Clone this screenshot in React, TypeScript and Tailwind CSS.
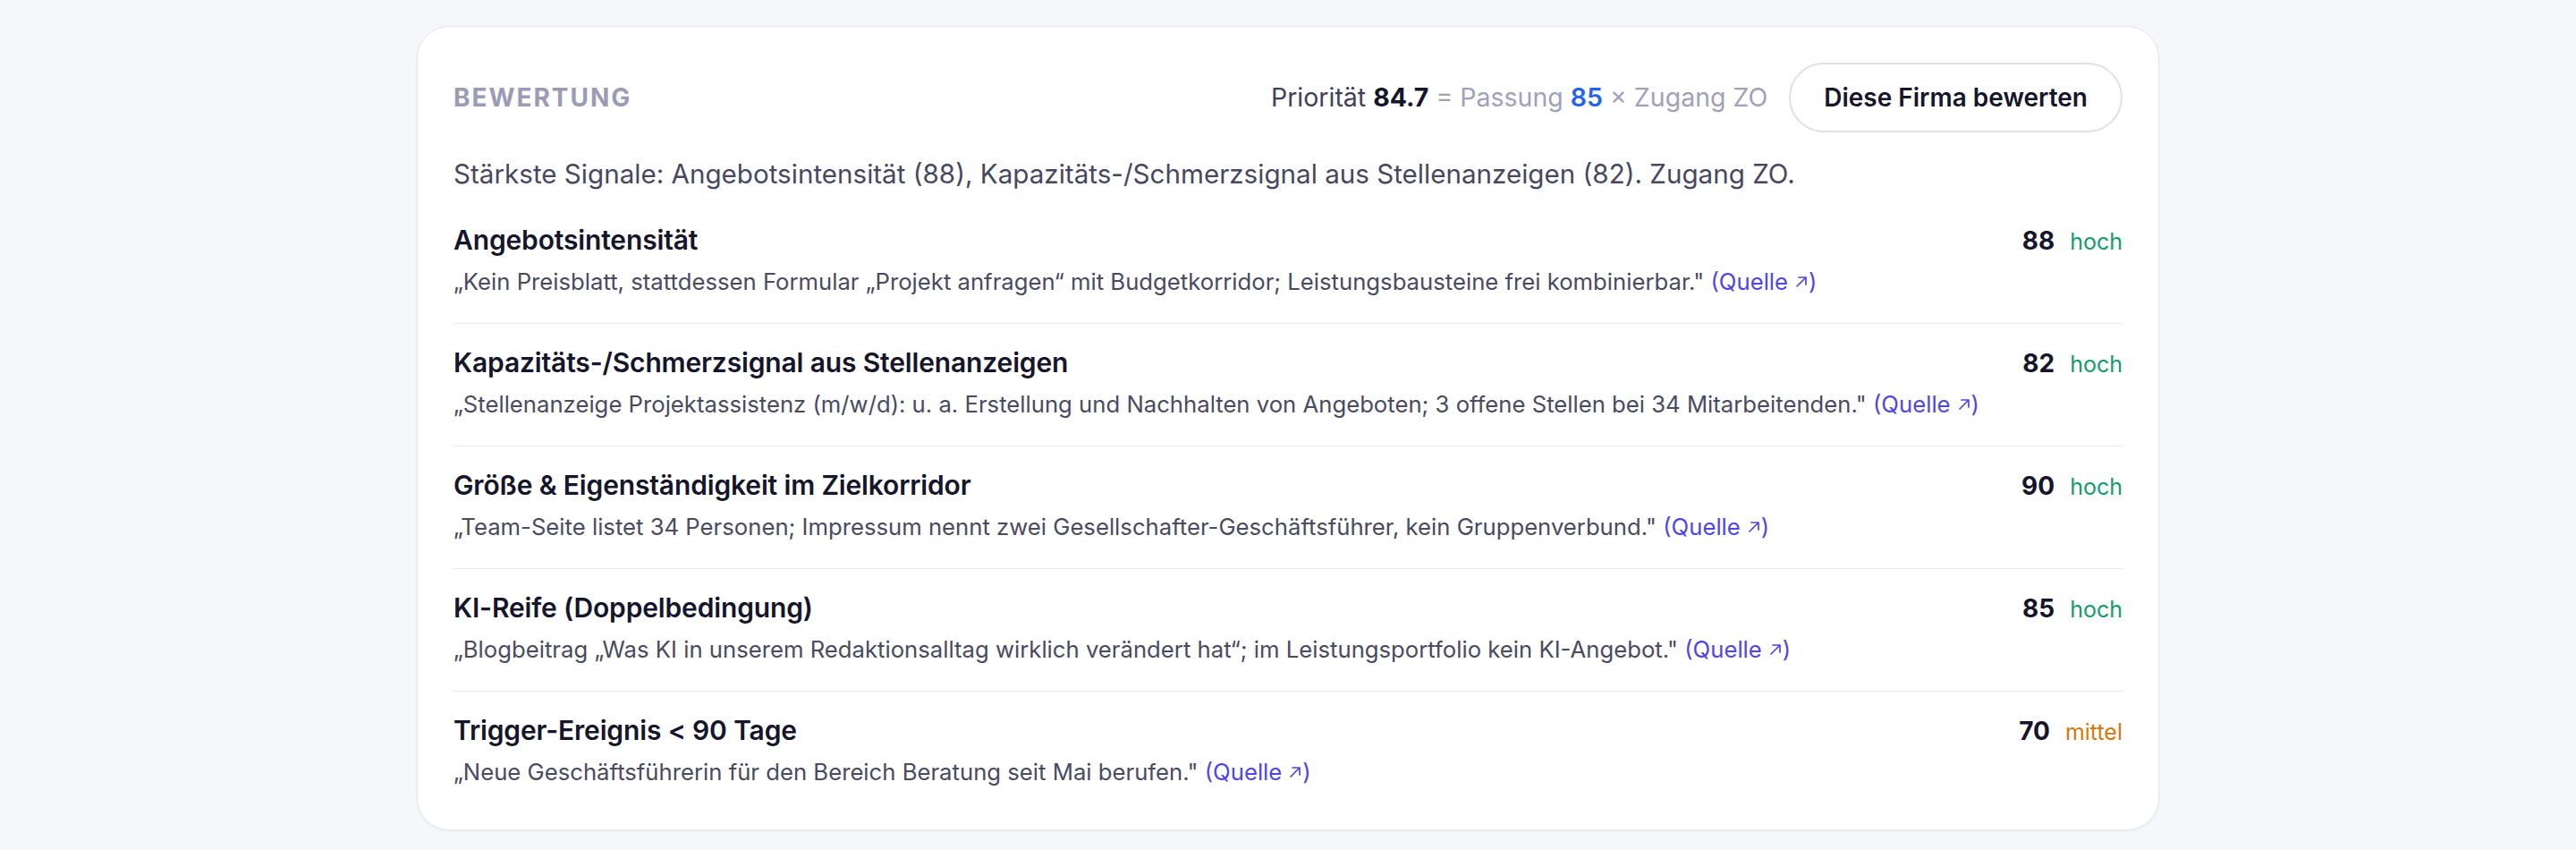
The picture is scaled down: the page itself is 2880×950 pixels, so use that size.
import React from "react";

type Level = "hoch" | "mittel";

interface Signal {
  title: string;
  score: number;
  level: Level;
  quote: string;
}

const signals: Signal[] = [
  {
    title: "Angebotsintensität",
    score: 88,
    level: "hoch",
    quote:
      "„Kein Preisblatt, stattdessen Formular „Projekt anfragen“ mit Budgetkorridor; Leistungsbausteine frei kombinierbar.\"",
  },
  {
    title: "Kapazitäts-/Schmerzsignal aus Stellenanzeigen",
    score: 82,
    level: "hoch",
    quote:
      "„Stellenanzeige Projektassistenz (m/w/d): u. a. Erstellung und Nachhalten von Angeboten; 3 offene Stellen bei 34 Mitarbeitenden.\"",
  },
  {
    title: "Größe & Eigenständigkeit im Zielkorridor",
    score: 90,
    level: "hoch",
    quote:
      "„Team-Seite listet 34 Personen; Impressum nennt zwei Gesellschafter-Geschäftsführer, kein Gruppenverbund.\"",
  },
  {
    title: "KI-Reife (Doppelbedingung)",
    score: 85,
    level: "hoch",
    quote:
      "„Blogbeitrag „Was KI in unserem Redaktionsalltag wirklich verändert hat“; im Leistungsportfolio kein KI-Angebot.\"",
  },
  {
    title: "Trigger-Ereignis < 90 Tage",
    score: 70,
    level: "mittel",
    quote: "„Neue Geschäftsführerin für den Bereich Beratung seit Mai berufen.\"",
  },
];

const levelColor: Record<Level, string> = {
  hoch: "text-[#139b6c]",
  mittel: "text-[#d9790a]",
};

const ExternalArrow = () => (
  <svg
    className="inline-block w-[16px] h-[16px] ml-[7px] mb-[3px]"
    viewBox="0 0 16 16"
    fill="none"
    aria-hidden="true"
  >
    <path
      d="M3 13L13 3M5 3H13V11"
      stroke="currentColor"
      strokeWidth="1.7"
      strokeLinecap="round"
      strokeLinejoin="round"
    />
  </svg>
);

const SignalRow: React.FC<{ signal: Signal }> = ({ signal }) => (
  <li className="border-b border-[#e9e9f1] pt-[25px] pb-[29px] first:pt-[26px] last:border-b-0 last:pb-0">
    <div className="flex items-baseline justify-between gap-6">
      <h3 className="text-[30px] leading-[36px] font-semibold tracking-[-0.005em] text-[#15152b]">
        {signal.title}
      </h3>
      <div className="flex items-baseline gap-[17px]">
        <span className="text-[28px] leading-[32px] font-bold text-[#15152b]">{signal.score}</span>
        <span className={`text-[25px] leading-[30px] ${levelColor[signal.level]}`}>
          {signal.level}
        </span>
      </div>
    </div>
    <p className="mt-3 text-[25.7px] leading-[34px] text-[#4a4a62]">
      {signal.quote}{" "}
      <a href="#" className="text-[#4f46e5]">
        (Quelle
        <ExternalArrow />)
      </a>
    </p>
  </li>
);

export default function App() {
  return (
    <div className="min-h-screen bg-[#f6f7fa] pt-[29px] pb-6 font-['Inter',sans-serif]">
      <section className="mx-auto w-[1948px] rounded-[36px] border border-[#e6e6ef] bg-white px-10 pt-10 pb-[47px] shadow-[0_1px_3px_rgba(20,20,60,0.05)]">
        <div className="flex items-center justify-between">
          <span className="text-[28px] font-bold tracking-[0.07em] text-[#9b9bb6]">BEWERTUNG</span>
          <div className="flex items-center gap-6">
            <p className="text-[28.5px] text-[#41415a]">
              Priorität <span className="font-bold text-[#15152b]">84.7</span>{" "}
              <span className="text-[#a1a1b9]">
                = Passung <span className="font-semibold text-[#2563eb]">85</span> × Zugang ZO
              </span>
            </p>
            <button className="h-[78px] rounded-full border-2 border-[#e0def1] px-[37px] text-[28px] font-semibold text-[#15152b]">
              Diese Firma bewerten
            </button>
          </div>
        </div>

        <p className="mt-7 text-[29.6px] leading-[36px] text-[#474760]">
          Stärkste Signale: Angebotsintensität (88), Kapazitäts-/Schmerzsignal aus Stellenanzeigen
          (82). Zugang ZO.
        </p>

        <ul className="mt-3">
          {signals.map((s) => (
            <SignalRow key={s.title} signal={s} />
          ))}
        </ul>
      </section>
    </div>
  );
}
